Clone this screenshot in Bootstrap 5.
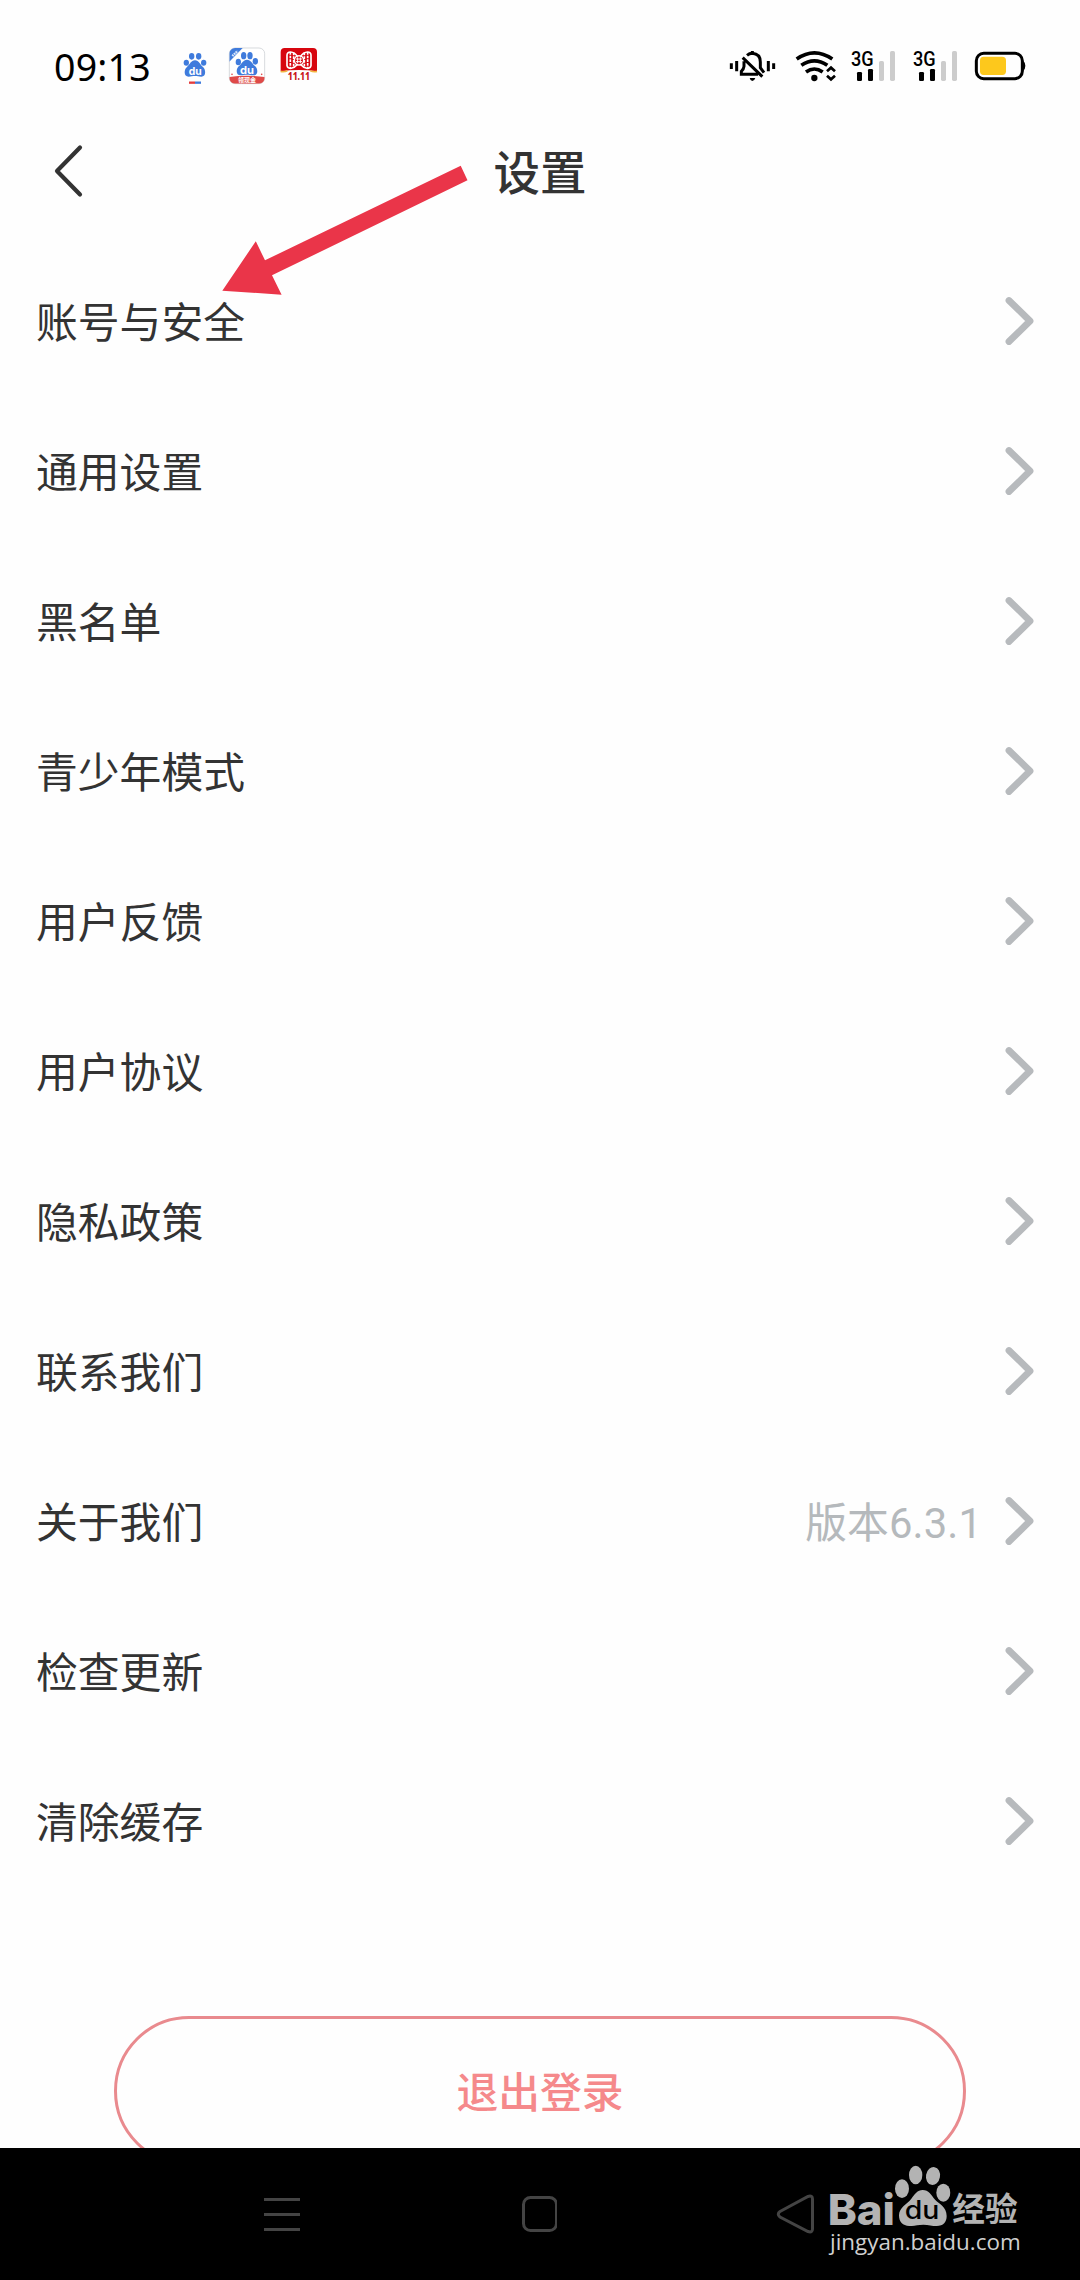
<!DOCTYPE html>
<html lang="zh-CN">
<head>
<meta charset="utf-8">
<meta name="viewport" content="width=device-width, initial-scale=1">
<title>设置</title>
<link href="https://cdn.jsdelivr.net/npm/bootstrap@5.3.0/dist/css/bootstrap.min.css" rel="stylesheet">
<style>
body{width:1080px;height:2280px;overflow:hidden;background:#fefefe;color:#333;font-family:Roboto,"Noto Sans CJK SC",sans-serif}
.phone{width:1080px;height:2280px}
svg{display:block;flex:none}
.status-bar{height:112px;padding:40px 53px 0 54px}
.clock{font:400 37.5px/54px "Noto Sans",sans-serif;color:#000;width:122px;letter-spacing:.2px}
.title-bar{height:120px;margin-bottom:14px;padding-left:50px;padding-right:50px}
.title-bar h1{font-size:46.5px;font-weight:500;line-height:60px;color:#333;padding-top:3px}
.side-slot{width:40px}
.settings .list-group-item{height:150px;padding:0 45px 0 36px;font-size:41.8px;line-height:60px;color:#333;background:transparent}
.settings span{padding-top:6px}
.version{color:#b5b9bc;margin-right:23px;letter-spacing:.1px}
.logout-wrap{padding:120px 114px 0;height:252px;overflow:hidden}
.logout{height:150px;border:3px solid #e98a8e;color:#f5898b;font-size:41.8px;font-weight:500;padding:6px 0 0}
.nav-keys{height:132px;background:#000;padding:0 264px 0 264px}
.pointer{left:215px;top:155px}
.watermark{left:820px;top:2160px}
</style>
</head>
<body>
<svg width="0" height="0" class="position-absolute">
<defs>
<symbol id="chev" viewBox="0 0 30 50"><path d="M4 4.5 25 25 4 45.5" fill="none" stroke="#b7babd" stroke-width="6.8" stroke-linecap="round" stroke-linejoin="round"/></symbol>
<symbol id="signal" viewBox="450 60 140 150">
<text x="453" y="137" font-family="Roboto" font-weight="500" font-size="60" textLength="68" lengthAdjust="spacingAndGlyphs">3G</text>
<rect x="471" y="156" width="15" height="27" rx="4"/><rect x="504" y="147" width="15" height="36" rx="4"/>
<rect x="537" y="123" width="15" height="60" rx="5" fill="#ccc"/><rect x="570" y="93" width="15" height="90" rx="5" fill="#ccc"/>
</symbol>
<symbol id="paw" viewBox="0 0 168 182">
<ellipse cx="22" cy="70" rx="21" ry="28"/><ellipse cx="63" cy="29" rx="20" ry="28"/><ellipse cx="115" cy="32" rx="21" ry="27" transform="rotate(10 115 32)"/><ellipse cx="146" cy="82" rx="21" ry="27"/>
<path d="M84 74C102 74 110 89 120 102C132 116 156 124 156 152C156 170 146 182 126 182C112 182 102 178 86 178C68 178 58 183 44 182C24 181 13 170 13 150C13 126 38 116 50 100C60 87 68 74 84 74Z"/>
</symbol>
</defs>
</svg>
<div class="phone d-flex flex-column position-relative">
<header class="status-bar d-flex align-items-start">
<div class="clock">09:13</div>
<svg width="32" height="50" viewBox="540 60 96 150" style="margin-left:4px">
<g fill="#3f7bdc"><ellipse cx="559" cy="128" rx="8" ry="9"/><ellipse cx="575" cy="109" rx="8" ry="10"/><ellipse cx="596" cy="109" rx="8" ry="10"/><ellipse cx="611" cy="128" rx="8" ry="9"/><path d="M585 121c12 0 15 13 24 20 8 6 11 29-5 29-8 0-12-2-19-2s-12 2-19 2c-16 0-14-23-5-29 9-8 12-20 24-20z"/></g>
<text x="566" y="164" font-family="Inter" font-weight="700" font-size="30" fill="#fff" textLength="39" lengthAdjust="spacingAndGlyphs">du</text>
<path d="M567 188h18" stroke="#e23c3c" stroke-width="7"/><path d="M585 188h18" stroke="#3f7bdc" stroke-width="7"/>
</svg>
<svg width="38" height="50" viewBox="684 60 114 150" style="margin-left:16px">
<clipPath id="app"><rect x="688" y="84" width="106" height="107" rx="17"/></clipPath>
<rect x="688" y="84" width="106" height="107" rx="17" fill="#fff" stroke="#cfd2d6" stroke-width="2.5"/>
<g clip-path="url(#app)"><path d="M688 84h40l-40 41z" fill="#3f7bdc"/><path d="M697 108l16-15" stroke="#dce8fb" stroke-width="7" stroke-dasharray="5 2"/><path d="M688 171q53-8 106 0v20H688z" fill="#df4a48"/></g>
<g fill="#3f7bdc"><ellipse cx="715" cy="126" rx="8" ry="10"/><ellipse cx="731" cy="107" rx="8" ry="11"/><ellipse cx="750" cy="107" rx="8" ry="11"/><ellipse cx="766" cy="124" rx="8" ry="10"/><path d="M741 119c12 0 15 12 24 19 9 7 11 28-5 28-8 0-12-2-19-2s-12 2-19 2c-16 0-14-21-5-28 9-7 12-19 24-19z"/></g>
<text x="720" y="161" font-family="Inter" font-weight="700" font-size="31" fill="#fff" textLength="42" lengthAdjust="spacingAndGlyphs">du</text>
<text x="714" y="187" font-family="Noto Sans CJK SC" font-weight="700" font-size="18" fill="#fff">领现金</text>
<circle cx="696" cy="163" r="2.5" fill="#df4a48"/><circle cx="785" cy="163" r="2.5" fill="#df4a48"/>
</svg>
<svg width="38" height="50" viewBox="840 60 114 150" style="margin-left:14px">
<path d="M842 154V96q0-12 12-12h85q12 0 12 12v58q-54-8-109 0z" fill="#d7060f"/>
<path d="M842 154q10 3 20-2M951 154q-10 3-20-2" stroke="#f1b541" stroke-width="5" fill="none"/>
<g fill="none" stroke="#fff"><path d="M893 110C880 91 860 93 861 106V137C864 150 882 146 893 133M901 110C914 91 934 93 933 106V137C930 150 912 146 901 133" stroke-width="5"/><circle cx="897" cy="121" r="14" stroke-width="4.500"/><path d="M888 117h18M888 125h18M893 112v18M901 112v18" stroke-width="3"/><path d="M871 96v50M881 98v46M913 98v46M923 96v50" stroke-width="5" stroke-dasharray="8 3"/></g>
<text x="863" y="180" font-family="Noto Sans" font-weight="800" font-size="31" fill="#c9151b" stroke="#fff" stroke-width="5" paint-order="stroke" textLength="67" lengthAdjust="spacingAndGlyphs">11.11</text>
</svg>
<div class="ms-auto d-flex">
<svg width="50" height="50" viewBox="84 60 150 150">
<path d="M94 130v17M110 123v31M205 123v31M221 130v17" stroke="#000" stroke-width="9"/>
<g fill="none" stroke="#000" stroke-width="9"><path d="M141 106Q148 100 157 100Q181 102 181 126V143L192 158M132 124V139Q131 148 124 154V163H174M128 113L187 170"/><path d="M157 93v8"/></g>
<path d="M149 174h17q-3 9-9 9t-8-9z"/>
</svg>
<svg width="42" height="50" viewBox="284 60 126 150" style="margin-left:16.5px">
<g fill="none" stroke="#000" stroke-width="11"><path d="M289 117Q342 80 396 117M303 136Q342 109 381 136M317 156Q342 138 367 156"/><path d="M380 154l12-11 12 11M380 167l12 11 12-11" stroke-width="8"/></g><circle cx="342" cy="174" r="9.5"/>
</svg>
<svg width="46.67" height="50" style="margin-left:13.5px"><use href="#signal"/></svg>
<svg width="46.67" height="50" style="margin-left:15.3px"><use href="#signal"/></svg>
<svg width="54" height="50" viewBox="822 60 162 150" style="margin-left:14px">
<rect x="832" y="100" width="138" height="76" rx="22" fill="none" stroke="#000" stroke-width="9"/><rect x="843" y="110" width="78" height="55" rx="11" fill="#fdc81c"/><path d="M972 122q7 4 7 15t-7 16z"/>
</svg>
</div>
</header>
<nav class="title-bar d-flex align-items-center justify-content-between">
<svg class="side-slot" width="40" height="60" viewBox="51 142 40 60"><path d="M81 147.500 58 171 81 194.500" fill="none" stroke="#333" stroke-width="4.200" stroke-linecap="round" stroke-linejoin="round"/></svg>
<h1 class="m-0">设置</h1><span class="side-slot"></span>
</nav>
<div class="settings list-group list-group-flush">
<div class="list-group-item border-0 d-flex align-items-center justify-content-between"><span>账号与安全</span><svg width="30" height="50"><use href="#chev"/></svg></div>
<div class="list-group-item border-0 d-flex align-items-center justify-content-between"><span>通用设置</span><svg width="30" height="50"><use href="#chev"/></svg></div>
<div class="list-group-item border-0 d-flex align-items-center justify-content-between"><span>黑名单</span><svg width="30" height="50"><use href="#chev"/></svg></div>
<div class="list-group-item border-0 d-flex align-items-center justify-content-between"><span>青少年模式</span><svg width="30" height="50"><use href="#chev"/></svg></div>
<div class="list-group-item border-0 d-flex align-items-center justify-content-between"><span>用户反馈</span><svg width="30" height="50"><use href="#chev"/></svg></div>
<div class="list-group-item border-0 d-flex align-items-center justify-content-between"><span>用户协议</span><svg width="30" height="50"><use href="#chev"/></svg></div>
<div class="list-group-item border-0 d-flex align-items-center justify-content-between"><span>隐私政策</span><svg width="30" height="50"><use href="#chev"/></svg></div>
<div class="list-group-item border-0 d-flex align-items-center justify-content-between"><span>联系我们</span><svg width="30" height="50"><use href="#chev"/></svg></div>
<div class="list-group-item border-0 d-flex align-items-center"><span>关于我们</span><span class="version ms-auto">版本6.3.1</span><svg width="30" height="50"><use href="#chev"/></svg></div>
<div class="list-group-item border-0 d-flex align-items-center justify-content-between"><span>检查更新</span><svg width="30" height="50"><use href="#chev"/></svg></div>
<div class="list-group-item border-0 d-flex align-items-center justify-content-between"><span>清除缓存</span><svg width="30" height="50"><use href="#chev"/></svg></div>
</div>
<div class="logout-wrap"><button type="button" class="logout btn rounded-pill w-100">退出登录</button></div>
<footer class="nav-keys d-flex align-items-center justify-content-between">
<svg width="36" height="40" viewBox="264 2194 36 40"><path d="M264 2199.500h36M264 2214.500h36M264 2229.500h36" stroke="#444" stroke-width="3"/></svg>
<svg width="38" height="40" viewBox="519 2194 38 40"><rect x="523.500" y="2197.500" width="33" height="33" rx="7" fill="none" stroke="#444" stroke-width="3" style="overflow:visible"/></svg>
<svg width="40" height="44" viewBox="776 2192 40 44"><path d="M780 2211.500 808 2196.500Q812.500 2195 812.500 2199V2229Q812.500 2233 808 2231.500L780 2217Q776.500 2214 780 2211.500Z" fill="none" stroke="#444" stroke-width="3"/></svg>
</footer>
<svg class="pointer position-absolute" width="260" height="145" viewBox="215 155 260 145"><path d="M460.700 165.700 467.500 180.300 272 275.300 281.600 294.700 222.300 290.700 255.800 241.300 265 260.300Z" fill="#ea3549"/></svg>
<svg class="watermark position-absolute" width="210" height="110" viewBox="240 120 630 330" fill="#b3b3b3">
<text x="263" y="314" font-family="Inter" font-weight="800" font-size="128" textLength="202" lengthAdjust="spacingAndGlyphs">Bai</text>
<use href="#paw" x="464" y="136" width="168" height="182"/>
<text x="494" y="297" font-family="Inter" font-weight="500" font-size="75" fill="#000" textLength="104" lengthAdjust="spacingAndGlyphs">du</text>
<text x="637" y="304" font-family="Noto Sans CJK SC" font-weight="700" font-size="98" textLength="196" lengthAdjust="spacingAndGlyphs">经验</text>
<text x="270" y="391" font-family="Open Sans" font-weight="500" font-size="65" fill="#d0d0d0" textLength="572" lengthAdjust="spacingAndGlyphs">jingyan.baidu.com</text>
</svg>
</div>
<script src="https://cdn.jsdelivr.net/npm/bootstrap@5.3.0/dist/js/bootstrap.bundle.min.js"></script>
</body>
</html>
